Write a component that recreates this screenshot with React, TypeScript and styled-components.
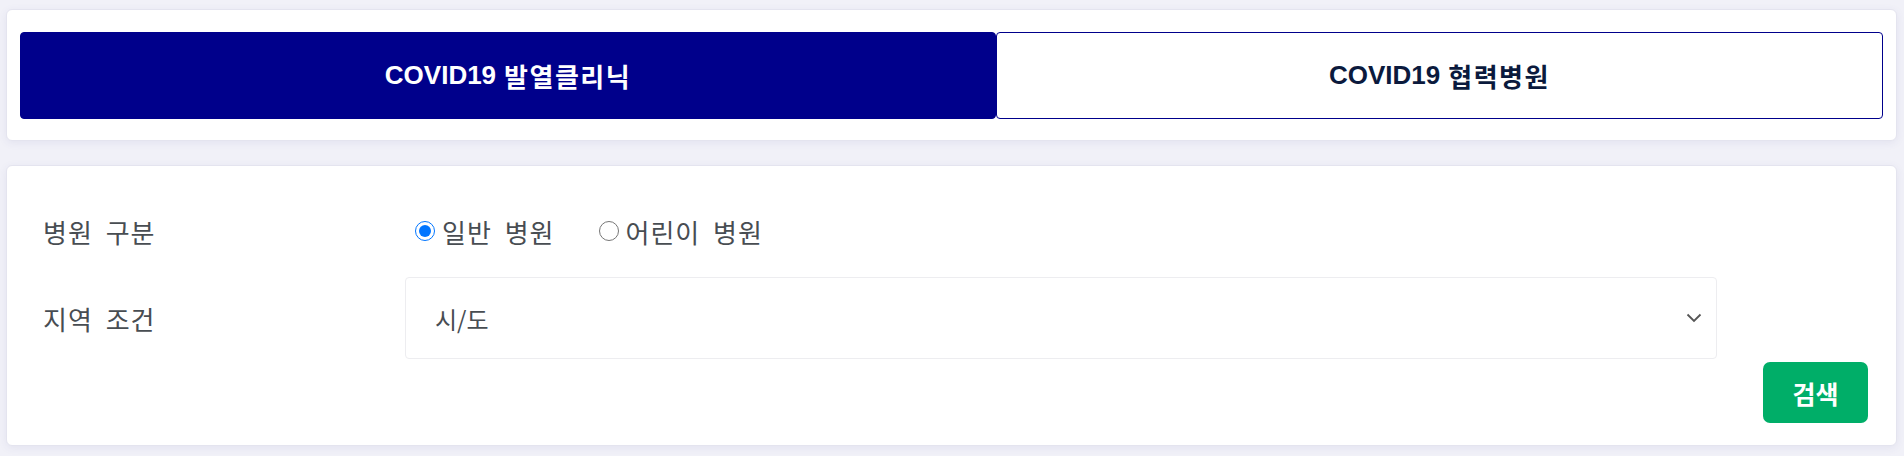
import React, { useState } from 'react';
import styled, { createGlobalStyle } from 'styled-components';

const GlobalStyle = createGlobalStyle`
  html, body {
    margin: 0;
    padding: 0;
    background: #f1f1f8;
  }
  * {
    box-sizing: border-box;
  }
`;

const Page = styled.div`
  padding: 9px 7px 9px 6px;
  display: flex;
  flex-direction: column;
  gap: 24px;
  font-family: "Liberation Sans", "Noto Sans CJK KR", sans-serif;
`;

const Card = styled.div`
  background: #ffffff;
  border: 1px solid #e4e4ef;
  border-radius: 6px;
  box-shadow: 0 2px 8px rgba(60, 60, 140, 0.08);
`;

const TabCard = styled(Card)`
  padding: 22px 13px 21px 13px;
`;

const TabRow = styled.div`
  display: grid;
  grid-template-columns: 976fr 887fr;
  height: 87px;
`;

interface TabProps {
  $active?: boolean;
}

const Tab = styled.button<TabProps>`
  display: flex;
  align-items: center;
  justify-content: center;
  gap: 8px;
  height: 100%;
  border: 1px solid #00008b;
  border-radius: 4px;
  background: ${p => (p.$active ? '#00008b' : '#ffffff')};
  color: ${p => (p.$active ? '#ffffff' : '#0b1a3d')};
  font-family: "Liberation Sans", "Noto Sans CJK KR", sans-serif;
  font-size: 26px;
  font-weight: 700;
  cursor: pointer;
  padding: 0;
`;

const Hangul = styled.span`
  letter-spacing: 1.5px;
`;

const SearchCard = styled(Card)`
  padding: 45px 28px 22px 36px;
  display: flex;
  flex-direction: column;
`;

const FormRow = styled.div`
  display: grid;
  grid-template-columns: 362px 1312px;
  align-items: center;
`;

const RadioRow = styled(FormRow)`
  height: 40px;
  margin-bottom: 26px;
`;

const Label = styled.div`
  font-family: "Noto Sans CJK KR", sans-serif;
  font-size: 26px;
  color: #484d52;
  letter-spacing: 1px;
  word-spacing: 6px;
`;

const RadioGroup = styled.div`
  display: flex;
  align-items: center;
  gap: 44px;
  padding-left: 10px;
`;

const RadioLabel = styled.label`
  display: flex;
  align-items: center;
  gap: 7px;
  font-family: "Noto Sans CJK KR", sans-serif;
  font-size: 26px;
  color: #484d52;
  letter-spacing: 1px;
  word-spacing: 6px;
  cursor: pointer;
`;

const Radio = styled.input`
  width: 20px;
  height: 20px;
  margin: 0;
`;

const SelectWrap = styled.div`
  position: relative;
  height: 82px;
`;

const Select = styled.select`
  appearance: none;
  width: 100%;
  height: 100%;
  border: 1px solid #ededf0;
  border-radius: 4px;
  background: #ffffff;
  padding: 0 30px 0 29px;
  font-family: "Noto Sans CJK KR", sans-serif;
  font-size: 24px;
  color: #484d52;
  outline: none;
`;

const Chevron = styled.svg`
  position: absolute;
  right: 15px;
  top: 50%;
  transform: translateY(-50%);
  pointer-events: none;
`;

const ButtonRow = styled.div`
  display: flex;
  justify-content: flex-end;
  margin-top: 3px;
`;

const SearchButton = styled.button`
  width: 105px;
  height: 61px;
  border: none;
  border-radius: 7px;
  background: #00ae68;
  color: #ffffff;
  font-family: "Noto Sans CJK KR", sans-serif;
  font-size: 25px;
  font-weight: 700;
  cursor: pointer;
`;

export default function App() {
  const [tab, setTab] = useState(0);
  const [kind, setKind] = useState('general');

  return (
    <>
      <GlobalStyle />
      <Page>
        <TabCard>
          <TabRow>
            <Tab $active={tab === 0} onClick={() => setTab(0)}>
              COVID19 <Hangul>발열클리닉</Hangul>
            </Tab>
            <Tab $active={tab === 1} onClick={() => setTab(1)}>
              COVID19 <Hangul>협력병원</Hangul>
            </Tab>
          </TabRow>
        </TabCard>

        <SearchCard>
          <RadioRow>
            <Label>병원 구분</Label>
            <RadioGroup>
              <RadioLabel>
                <Radio type="radio" name="kind" checked={kind === 'general'} onChange={() => setKind('general')} />
                일반 병원
              </RadioLabel>
              <RadioLabel>
                <Radio type="radio" name="kind" checked={kind === 'child'} onChange={() => setKind('child')} />
                어린이 병원
              </RadioLabel>
            </RadioGroup>
          </RadioRow>
          <FormRow>
            <Label>지역 조건</Label>
            <SelectWrap>
              <Select defaultValue="">
                <option value="">시/도</option>
              </Select>
              <Chevron width="16" height="10" viewBox="0 0 16 10">
                <path d="M1.5 1.5 L8 8 L14.5 1.5" fill="none" stroke="#555" strokeWidth="1.8" />
              </Chevron>
            </SelectWrap>
          </FormRow>
          <ButtonRow>
            <SearchButton>검색</SearchButton>
          </ButtonRow>
        </SearchCard>
      </Page>
    </>
  );
}
